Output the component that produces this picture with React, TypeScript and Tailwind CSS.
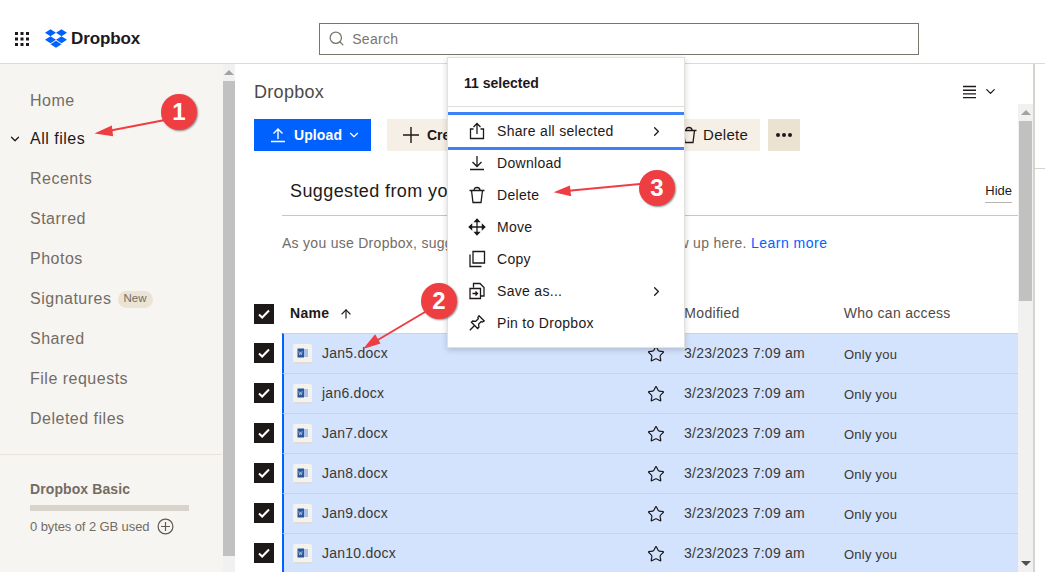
import { ArrowUp, ChevronDown, ChevronRight, Search, Star } from 'lucide-react';

const sans = { fontFamily: '"Liberation Sans", Arial, sans-serif' };

const navItems = ['Recents', 'Starred', 'Photos', 'Signatures', 'Shared', 'File requests', 'Deleted files'];
const files = ['Jan5.docx', 'jan6.docx', 'Jan7.docx', 'Jan8.docx', 'Jan9.docx', 'Jan10.docx'];

function DropboxLogo() {
  return (
    <svg width="22" height="19" viewBox="0 0 235.45 200" fill="#0061fe">
      <path d="M58.86 0L0 37.5 58.86 75l58.87-37.5zM176.59 0l-58.86 37.5L176.59 75l58.86-37.5zM0 112.5L58.86 150l58.87-37.5L58.86 75zM176.59 75l-58.86 37.5 58.86 37.5 58.86-37.5zM58.86 162.5l58.87 37.5 58.86-37.5-58.86-37.5z" />
    </svg>
  );
}

function Grid() {
  return (
    <svg width="16" height="16" viewBox="0 0 16 16" fill="#1e1919">
      {[1, 6.5, 12].map(y =>
        [1, 6.5, 12].map(x => <rect key={`${x}-${y}`} x={x} y={y} width="3" height="3" />)
      )}
    </svg>
  );
}

function Check() {
  return (
    <div className="w-5 h-5 bg-[#1e1919] flex items-center justify-center shrink-0">
      <svg width="12" height="10" viewBox="0 0 12 10" fill="none" stroke="#fff" strokeWidth="2">
        <path d="M1 5.5l3.2 3L11 1.5" />
      </svg>
    </div>
  );
}

function WordIcon() {
  return (
    <div className="w-[19px] h-[20px] bg-[#f4f2ee] rounded-[2px] border-b-2 border-[#dfdcd6] flex items-center justify-center shrink-0">
      <svg width="12" height="10" viewBox="0 0 12 10">
        <rect x="5" y="1" width="6" height="8" fill="#a9c1e4" />
        <rect x="0.5" y="0.5" width="6.5" height="9" fill="#2b579a" />
        <path d="M1.8 3l.8 4 .9-3 .9 3 .8-4" stroke="#cfdcf0" strokeWidth=".6" fill="none" />
      </svg>
    </div>
  );
}

function TrashIcon() {
  return (
    <svg width="18" height="18" viewBox="0 0 18 18" fill="none" stroke="#1e1919" strokeWidth="1.3">
      <path d="M1.5 4.5h15M6 4.5c0-2 1-3 3-3s3 1 3 3M3.5 4.5l1.5 12h8l1.5-12" />
    </svg>
  );
}

const menuIcons: Record<string, JSX.Element> = {
  share: (
    <svg width="18" height="18" viewBox="0 0 18 18" fill="none" stroke="#1e1919" strokeWidth="1.3">
      <path d="M5.5 7H2.5v9.5h13V7h-3M9 12V1.5M5.5 5L9 1.5 12.5 5" />
    </svg>
  ),
  download: (
    <svg width="18" height="18" viewBox="0 0 18 18" fill="none" stroke="#1e1919" strokeWidth="1.3">
      <path d="M9 2v10M4.5 8L9 12.5 13.5 8M2 15.5h14" />
    </svg>
  ),
  trash: <TrashIcon />,
  move: (
    <svg width="18" height="18" viewBox="0 0 18 18" fill="none" stroke="#1e1919" strokeWidth="1.3">
      <path d="M9 1.5v15M1.5 9h15" />
      <path d="M6.8 3.6L9 1.2l2.2 2.4zM6.8 14.4L9 16.8l2.2-2.4zM3.6 6.8L1.2 9l2.4 2.2zM14.4 6.8L16.8 9l-2.4 2.2z" fill="#1e1919" />
    </svg>
  ),
  copy: (
    <svg width="18" height="18" viewBox="0 0 18 18" fill="none" stroke="#1e1919" strokeWidth="1.3">
      <path d="M5 1.5h11.5V13H5zM2 4.5v12h11.5" />
    </svg>
  ),
  save: (
    <svg width="18" height="18" viewBox="0 0 18 18" fill="none" stroke="#1e1919" strokeWidth="1.3">
      <path d="M5.5 5.5v-4h6.5l4 4v8.5h-3.5M2 6.5h10.5v10H2zM4.5 11.5H9.5M7.5 9.5l2 2-2 2" />
    </svg>
  ),
  pin: (
    <svg width="18" height="18" viewBox="0 0 18 18" fill="none" stroke="#1e1919" strokeWidth="1.3">
      <path d="M11 1.8l5.2 5.2-1.6 1-1.4-.4-2.6 2.6.3 3-1.3 1.3-6.2-6.2 1.3-1.3 3 .3 2.6-2.6-.4-1.4zM6.3 11.7L1.8 16.2" />
    </svg>
  ),
};

const menuItems = [
  { icon: 'trash', label: 'Delete' },
  { icon: 'move', label: 'Move' },
  { icon: 'copy', label: 'Copy' },
  { icon: 'save', label: 'Save as...', arrow: true },
  { icon: 'pin', label: 'Pin to Dropbox' },
];

function ScrollArrow({ down }: { down?: boolean }) {
  return (
    <div className={`w-0 h-0 border-x-[5px] border-x-transparent ${down ? 'border-t-[5px] border-t-[#505050]' : 'border-b-[5px] border-b-[#a3a3a3]'}`} />
  );
}

function Badge({ n, className }: { n: number; className: string }) {
  return (
    <div className={`absolute w-9 h-9 rounded-full bg-[#ef3e42] shadow-[1px_1px_2px_rgba(0,0,0,0.45)] flex items-center justify-center text-white text-[24px] font-bold ${className}`}>
      {n}
    </div>
  );
}

export default function App() {
  return (
    <div className="relative w-[1045px] h-[572px] overflow-hidden bg-white text-[#1e1919]" style={sans}>
      <header className="h-[64px] flex items-center border-b border-[#dcdad6] bg-white">
        <div className="ml-[14px] mt-[14px]"><Grid /></div>
        <div className="ml-[15px] mt-[14px]"><DropboxLogo /></div>
        <span className="ml-[4px] mt-[15px] text-[17px] font-bold tracking-[-0.1px]">Dropbox</span>
        <div className="ml-[179px] mt-[14px] w-[600px] h-[32px] border border-[#7b756f] flex items-center pl-[8px] gap-[7px] text-[#7b756f] text-[14px] tracking-[0.3px]">
          <Search size={17} strokeWidth={1.8} />
          <span className="mt-[1px]">Search</span>
        </div>
      </header>

      <div className="flex h-[508px]">
        <aside className="w-[223px] shrink-0 bg-[#f7f5f2] flex flex-col">
          <nav className="pt-[18px] text-[16px] tracking-[0.5px] text-[#736c64]">
            <div className="h-[38px] pl-[30px] flex items-center">Home</div>
            <div className="h-[39px] pb-[2px] pl-[8px] flex items-center text-[#1e1919]">
              <ChevronDown size={14} strokeWidth={2.2} className="mr-[8px]" />
              All files
            </div>
            {navItems.map(item => (
              <div key={item} className="h-[40px] pl-[30px] flex items-center">
                {item}
                {item === 'Signatures' && (
                  <span className="ml-[6px] h-[17px] px-[6px] rounded-full bg-[#ebe4d4] text-[11.5px] tracking-normal flex items-center">New</span>
                )}
              </div>
            ))}
          </nav>
          <div className="mt-[15px] mr-[1px] border-t border-[#eae3dd] pl-[30px] pt-[26px] text-[#736c64]">
            <div className="text-[14px] font-bold leading-[16px] tracking-[0.1px]">Dropbox Basic</div>
            <div className="mt-[8px] w-[159px] h-[6px] bg-[#d8d3cb]" />
            <div className="mt-[6px] flex items-center text-[13px] tracking-[-0.1px]">
              0 bytes of 2 GB used
              <svg className="ml-[8px]" width="17" height="17" viewBox="0 0 17 17" fill="none" stroke="#5f5a54" strokeWidth="1.2">
                <circle cx="8.5" cy="8.5" r="7.4" />
                <path d="M8.5 4v9M4 8.5h9" />
              </svg>
            </div>
          </div>
        </aside>

        <div className="w-[12px] shrink-0 bg-[#f1f1f1] flex flex-col items-center">
          <div className="h-[17px] flex items-center"><ScrollArrow /></div>
          <div className="w-full h-[475px] bg-[#c1c1c1]" />
        </div>

        <main className="w-[800px] shrink-0 border-r-2 border-[#d6d3cd] flex flex-col">
          <div className="h-[40px] flex items-end justify-between pl-[19px] pr-[35px]">
            <span className="text-[18px] leading-[24px] tracking-[0.3px] text-[#4e4a46]">Dropbox</span>
            <div className="flex items-center gap-[6px] mb-[5px]">
              <svg width="15" height="14" viewBox="0 0 15 14" stroke="#1e1919" strokeWidth="1.4">
                <path d="M1 1.5h13M1 5.2h13M1 8.9h13M1 12.6h13" />
              </svg>
              <ChevronDown size={15} strokeWidth={2} />
            </div>
          </div>

          <div className="flex flex-1 min-h-0">
            <div className="w-[783px] shrink-0">
              <div className="pt-[15px] pl-[19px] flex h-[47px] text-[14px] font-bold">
                <div className="w-[117px] h-[32px] bg-[#0061fe] text-white flex items-center pl-[16px] tracking-[0.1px]">
                  <svg width="16" height="16" viewBox="0 0 16 16" fill="none" stroke="#fff" strokeWidth="1.4">
                    <path d="M8 12V2M3.5 6.5L8 2l4.5 4.5M1 14.5h14" />
                  </svg>
                  <span className="ml-[8px]">Upload</span>
                  <ChevronDown size={14} strokeWidth={2} className="ml-[5px]" />
                </div>
                <div className="ml-[16px] w-[281px] h-[32px] bg-[#f5efe5] flex items-center pl-[16px] gap-[8px]">
                  <svg width="16" height="16" viewBox="0 0 16 16" stroke="#1e1919" strokeWidth="1.4">
                    <path d="M8 0v16M0 8h16" />
                  </svg>
                  Create
                </div>
                <div className="w-[92px] h-[32px] bg-[#f5efe5] flex items-center pl-[12px] gap-[5px] font-normal text-[15px] tracking-[0.3px]">
                  <TrashIcon />
                  Delete
                </div>
                <div className="ml-[8px] w-[32px] h-[32px] bg-[#ebe2d2] flex items-center justify-center gap-[2px]">
                  <span className="w-[4px] h-[4px] rounded-full bg-[#1e1919]" />
                  <span className="w-[4px] h-[4px] rounded-full bg-[#1e1919]" />
                  <span className="w-[4px] h-[4px] rounded-full bg-[#1e1919]" />
                </div>
              </div>

              <div className="ml-[47px] mt-[17px] h-[48px] border-b border-[#c9c6bf] flex items-start justify-between pl-[8px] pr-[6px] pt-[11px]">
                <span className="text-[18px] leading-[24px] tracking-[0.4px]">Suggested from your activity</span>
                <span className="mt-[3px] text-[13px] leading-[18px] border-b border-[#b9b5ae] pb-[2px]">Hide</span>
              </div>
              <div className="mt-[17px] ml-[47px] h-[20px] text-[14px] leading-[20px] tracking-[0.28px] text-[#736c64] whitespace-nowrap">
                As you use Dropbox, suggested folders will automatically show up here.{' '}
                <span className="text-[#0061fe] tracking-[0.5px]">Learn more</span>
              </div>

              <div className="mt-[41px] h-[39px] pl-[19px] flex items-center text-[14px] tracking-[0.3px]">
                <Check />
                <span className="ml-[16px] font-bold">Name</span>
                <ArrowUp size={14} strokeWidth={2} className="ml-[10px]" />
                <span className="ml-[331px] text-[#4e4a46]">Modified</span>
                <span className="ml-[104px] text-[#4e4a46]">Who can access</span>
              </div>
              {files.map(file => (
                <div key={file} className="h-[40px] flex items-center pl-[19px]">
                  <Check />
                  <div className="ml-[8px] w-[736px] h-[40px] border-l-2 border-[#0061fe] border-t border-t-[#c6d3e8] bg-[#d3e3fd] flex items-center pl-[9px] text-[14px] tracking-[0.25px]">
                    <WordIcon />
                    <span className="ml-[10px] w-[325px] text-[#3b3835]">{file}</span>
                    <Star size={18} strokeWidth={1.6} />
                    <span className="ml-[19px] w-[160px] text-[#3b3835]">3/23/2023 7:09 am</span>
                    <span className="mt-[2px] text-[13px] text-[#3b3835]">Only you</span>
                  </div>
                </div>
              ))}
            </div>

            <div className="w-[15px] shrink-0 bg-[#f1f1f1] flex flex-col items-center">
              <div className="h-[17px] flex items-center"><ScrollArrow /></div>
              <div className="w-[13px] h-[180px] bg-[#c1c1c1]" />
              <div className="mt-auto h-[17px] flex items-center"><ScrollArrow down /></div>
            </div>
          </div>
        </main>

        <div className="flex-1 min-w-0">
          <div className="mt-[104px] border-t border-[#d6d3cd]" />
        </div>
      </div>

      <div className="absolute left-[447px] top-[57px] w-[238px] h-[291px] bg-white border border-[#e3e1dc] shadow-[0_2px_6px_rgba(0,0,0,0.18)] text-[14px] tracking-[0.3px]">
        <div className="h-[49px] border-b border-[#dfddd8] pl-[16px] pt-[2px] flex items-center font-bold tracking-normal">11 selected</div>
        <div className="mt-[5px] h-[38px] border-y-[3px] border-[#3b82f6] flex items-center pl-[20px]">
          <div className="w-[29px]">{menuIcons.share}</div>
          <span className="flex-1">Share all selected</span>
          <ChevronRight size={15} strokeWidth={2} className="mr-[20px]" />
        </div>
        <div className="h-[29px] pb-[3px] flex items-center pl-[20px]">
          <div className="w-[29px]">{menuIcons.download}</div>
          <span>Download</span>
        </div>
        {menuItems.map(item => (
          <div key={item.label} className="h-[32px] flex items-center pl-[20px]">
            <div className="w-[29px]">{menuIcons[item.icon]}</div>
            <span className="flex-1">{item.label}</span>
            {item.arrow && <ChevronRight size={15} strokeWidth={2} className="mr-[20px]" />}
          </div>
        ))}
      </div>

      <svg className="absolute inset-0 pointer-events-none" width="1045" height="572" fill="#ef3e42" stroke="#ef3e42" strokeWidth="2">
        <path d="M165 120L108 131" />
        <path d="M98 133l13-6 1 8z" />
        <path d="M425 312L376 341" />
        <path d="M366 347l9-11 4 7z" />
        <path d="M640 184L566 191" />
        <path d="M557 192l12-5 1 8z" />
      </svg>
      <Badge n={1} className="left-[161px] top-[94px]" />
      <Badge n={2} className="left-[421px] top-[283px]" />
      <Badge n={3} className="left-[639px] top-[170px]" />
    </div>
  );
}
